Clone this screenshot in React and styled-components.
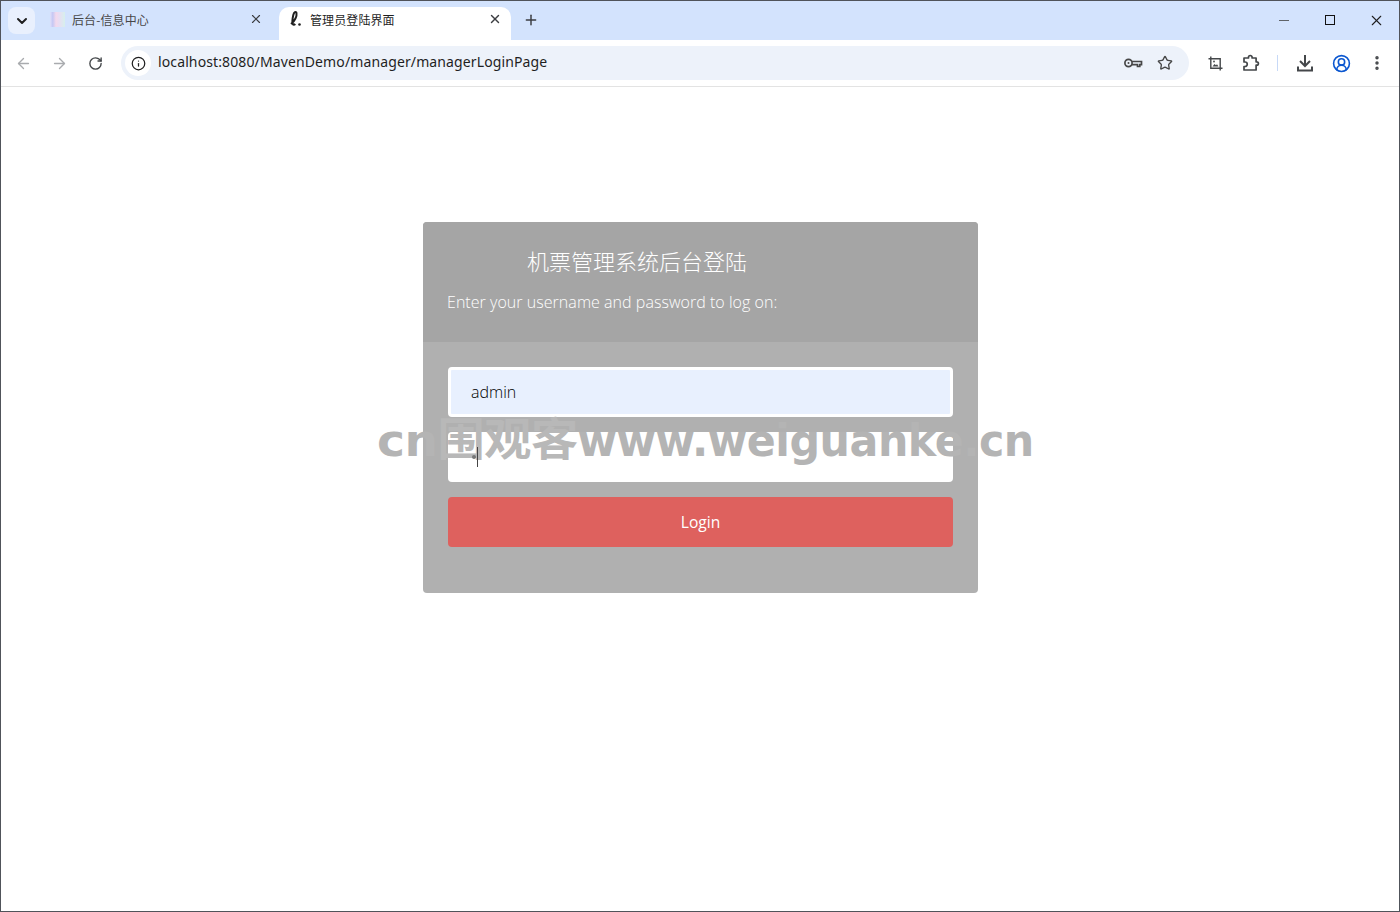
import React from 'react';
import styled, { createGlobalStyle } from 'styled-components';
import { ChevronDown, X, Plus, ArrowLeft, ArrowRight, RotateCw, Info, Star, EllipsisVertical, CircleUserRound } from 'lucide-react';

const Global = createGlobalStyle`
  html, body { margin: 0; padding: 0; height: 100%; background: #fff; }
  * { box-sizing: border-box; }
  body { font-family: "Open Sans", "Noto Sans CJK SC", sans-serif; }
`;

const Win = styled.div`
  position: relative; width: 1400px; height: 912px; display: flex; flex-direction: column;
  border: 1px solid #50535a; overflow: hidden; background: #fff;
`;
const TabStrip = styled.div`
  height: 39px; background: #d3e3fd; display: flex; align-items: flex-end; flex: none; padding-left: 7px;
`;
const TabMenu = styled.div`
  width: 27px; height: 27px; border-radius: 8px; background: #e9f0fd; display: flex; align-items: center; justify-content: center;
  margin-bottom: 6px; color: #1f1f1f;
`;
const Tab = styled.div`
  width: 232px; height: 33px; display: flex; align-items: center; margin-left: ${p => p.$first ? '5px' : '7px'};
  padding: 0 9px 9px 10px; border-radius: 10px 10px 0 0; background: ${p => p.$active ? '#fff' : 'transparent'};
  font: 12px "Noto Sans CJK SC", sans-serif; color: ${p => p.$active ? '#1f1f1f' : '#474747'};
`;
const FirstFavicon = styled.span`
  width: 15px; height: 15px; flex: none; margin: 0 7px 0 0;
  background: linear-gradient(90deg, #dfe0fa 0%, #c5c8f4 18%, #f3d9ec 40%, #e9dcf3 60%, #d6f0ec 100%);
`;
const TabTitle = styled.span` flex: 1; margin-left: ${p => p.$gap || 0}px; letter-spacing: 0.1px; white-space: nowrap; `;
const TabClose = styled(X)` flex: none; color: #3b3d41; `;
const NewTab = styled.div`
  margin: 0 0 6px 10px; width: 20px; height: 28px; display: flex; align-items: center; justify-content: center; color: #3b3d41;
`;
const Spacer = styled.div` flex: 1; `;
const WinBtn = styled.div`
  width: 46px; height: 38px; align-self: flex-start; display: flex; align-items: center; justify-content: center; color: #1f1f1f;
`;
const WinMin = styled.span` width: 10px; height: 1px; background: #5f6368; `;
const WinMax = styled.span` width: 10px; height: 10px; border: 1px solid #111; `;
const Toolbar = styled.div`
  height: 47px; flex: none; background: #fff; border-bottom: 1px solid #e3e3e3; display: flex; align-items: center;
  padding: 0 5px 0 4px; border-radius: 10px 10px 0 0;
`;
const NavBtn = styled.div`
  width: 36px; height: 34px; display: flex; align-items: center; justify-content: center; flex: none;
  color: ${p => p.$off ? '#a9abae' : p.$blue ? '#0b57d0' : '#44474a'};
`;
const Omni = styled.div`
  width: 1068px; height: 34px; margin-left: 8px; border-radius: 17px; background: #edf2fa; display: flex; align-items: center; padding: 0 8px 0 4px; flex: none;
`;
const SiteInfo = styled.div`
  width: 26px; height: 26px; border-radius: 50%; background: #fff; display: flex; align-items: center; justify-content: center; color: #1f1f1f; flex: none;
`;
const Url = styled.div`
  flex: 1; margin-left: 7px; font: 14px/20px "Noto Sans", "Open Sans", sans-serif; color: #1f1f1f; letter-spacing: 0.12px; white-space: nowrap; position: relative; top: -1px;
`;
const OmniIcon = styled.div`
  width: 32px; height: 28px; display: flex; align-items: center; justify-content: center; color: #474747; flex: none;
`;
const Divider = styled.div` width: 1px; height: 16px; background: #c7d9f7; margin: 0 9px 0 8px; flex: none; `;
const ToolGroup = styled.div` display: flex; align-items: center; margin-left: 8px; `;

const Page = styled.main`
  flex: 1; background: #fff; display: flex; flex-direction: column; align-items: center; padding-top: 135px;
`;
const Card = styled.div`
  width: 555px; height: 371px; border-radius: 4px; overflow: hidden; background: #b0b0b0; margin-left: 1px;
`;
const CardHead = styled.div`
  height: 120px; background: #a5a5a5; padding: 23px 24px 0 24px;
`;
const CardTitle = styled.h3`
  margin: 0 0 0 80px; font: 300 22px/30px "Noto Sans CJK SC", sans-serif; color: #fff;
`;
const CardSub = styled.p`
  margin: 17px 0 0 0; font: 300 16px/20px "Open Sans", sans-serif; color: #fff; letter-spacing: 0.04px; white-space: nowrap;
`;
const CardBody = styled.div`
  padding: 25px 25px 0 25px; display: flex; flex-direction: column; gap: 15px;
`;
const Field = styled.div`
  position: relative; height: 50px; border-radius: 4px; background: ${p => p.$filled ? '#e8f0fe' : '#fff'};
  border: ${p => p.$filled ? '3px solid #fff' : 'none'}; padding-left: ${p => p.$filled ? '20px' : '24px'};
  display: flex; align-items: center; font: 300 16px "Open Sans", sans-serif; color: #000;
`;
const Dot = styled.span` width: 4px; height: 4px; border-radius: 50%; background: #777; position: relative; z-index: 2; `;
const Caret = styled.span` width: 1px; height: 20px; background: #444; margin-left: 1px; position: relative; z-index: 2; `;
const LoginBtn = styled.div`
  height: 50px; border-radius: 4px; background: #de615e; color: #fff; display: flex; align-items: center; justify-content: center;
  font: 400 15.600px "Open Sans", sans-serif;
`;
const Watermark = styled.div`
  position: absolute; left: 376px; top: 411px; font: 700 45px/50px "DejaVu Sans", "Noto Sans CJK SC", sans-serif;
  color: #b4b4b4; white-space: nowrap; transform-origin: left center; transform: scaleX(1.05); letter-spacing: -0.5px;
`;
const Hanzi = styled.span` font: 700 45px/50px "Noto Sans CJK SC", sans-serif; color: #b8b8b8; `;
const WatermarkLatin = styled.span` display: inline-block; transform-origin: left center; transform: scaleX(0.905); `;

const KeyIcon = () => (
  <svg width="20" height="20" viewBox="0 0 20 20" fill="none" stroke="currentColor" strokeWidth="1.7">
    <circle cx="5.5" cy="10" r="3.6" />
    <circle cx="5.5" cy="10" r="1" fill="currentColor" stroke="none" />
    <path d="M9 8.5h9.5v3.2h-1.700v1.800h-2.300v-1.800H9" />
  </svg>
);
const CropIcon = () => (
  <svg width="15" height="15" viewBox="0 0 15 15" fill="none" stroke="currentColor" strokeWidth="1.4">
    <path d="M2.800 0.500V12.200H14.500M0.500 2.800H12.200V14.500" />
    <path d="M4.500 10.500l2-2.600 1.500 1.400 1-1 1.500 2.200z" fill="currentColor" stroke="none" />
    <circle cx="6" cy="5.500" r="0.900" fill="currentColor" stroke="none" />
  </svg>
);
const PuzzleIcon = () => (
  <svg width="18" height="18" viewBox="0 0 18 18" fill="none" stroke="currentColor" strokeWidth="1.700" strokeLinejoin="round">
    <path d="M2 4h4.500V3.300a1.800 1.800 0 0 1 3.600 0V4h4v3.800h.6a1.700 1.700 0 0 1 0 3.400h-.6V16H2v-3.500h1a2 2 0 0 0 0-4.500H2z" />
  </svg>
);
const DownloadIcon = () => (
  <svg width="18" height="18" viewBox="0 0 18 18" fill="none" stroke="currentColor" strokeWidth="2">
    <path d="M9 1v10.500M4 7l5 5 5-5M2 12.500V16.500H16V12.500" />
  </svg>
);
const ScriptFav = () => (
  <svg width="14" height="18" viewBox="0 0 14 18" fill="none" stroke="#1f1f1f" strokeWidth="2">
    <path d="M2 14c4-3 6-8 5.500-11C7 1 5 2 4.300 5c-.8 3.500-1.300 7-.5 9 .5 1 1.500 1 2.500 0" />
    <circle cx="10.500" cy="14.500" r="1.300" fill="#1f1f1f" stroke="none" />
  </svg>
);

export default function App() {
  return (
    <Win>
      <Global />
      <TabStrip>
        <TabMenu><ChevronDown size={16} strokeWidth={3} /></TabMenu>
        <Tab $first>
          <FirstFavicon />
          <TabTitle>后台-信息中心</TabTitle>
          <TabClose size={14} strokeWidth={2} />
        </Tab>
        <Tab $active>
          <ScriptFav />
          <TabTitle $gap={7}>管理员登陆界面</TabTitle>
          <TabClose size={14} strokeWidth={2.4} />
        </Tab>
        <NewTab><Plus size={16} strokeWidth={2.2} /></NewTab>
        <Spacer />
        <WinBtn><WinMin /></WinBtn>
        <WinBtn><WinMax /></WinBtn>
        <WinBtn><X size={17} strokeWidth={1.5} /></WinBtn>
      </TabStrip>
      <Toolbar>
        <NavBtn $off><ArrowLeft size={17} strokeWidth={1.9} /></NavBtn>
        <NavBtn $off><ArrowRight size={17} strokeWidth={1.9} /></NavBtn>
        <NavBtn><RotateCw size={15} strokeWidth={2.2} /></NavBtn>
        <Omni>
          <SiteInfo><Info size={15} strokeWidth={2} /></SiteInfo>
          <Url>localhost:8080/MavenDemo/manager/managerLoginPage</Url>
          <OmniIcon><KeyIcon /></OmniIcon>
          <OmniIcon><Star size={16} strokeWidth={2} /></OmniIcon>
        </Omni>
        <ToolGroup>
          <NavBtn><CropIcon /></NavBtn>
          <NavBtn><PuzzleIcon /></NavBtn>
          <Divider />
          <NavBtn><DownloadIcon /></NavBtn>
          <NavBtn $blue><CircleUserRound size={19} strokeWidth={2} /></NavBtn>
          <NavBtn><EllipsisVertical size={18} strokeWidth={2.6} /></NavBtn>
        </ToolGroup>
      </Toolbar>
      <Page>
        <Card>
          <CardHead>
            <CardTitle>机票管理系统后台登陆</CardTitle>
            <CardSub>Enter your username and password to log on:</CardSub>
          </CardHead>
          <CardBody>
            <Field $filled>admin</Field>
            <Field><Dot /><Caret /></Field>
            <LoginBtn>Login</LoginBtn>
          </CardBody>
        </Card>
      </Page>
      <Watermark>cn<Hanzi>围观客</Hanzi><WatermarkLatin>www.weiguanke.cn</WatermarkLatin></Watermark>
    </Win>
  );
}
